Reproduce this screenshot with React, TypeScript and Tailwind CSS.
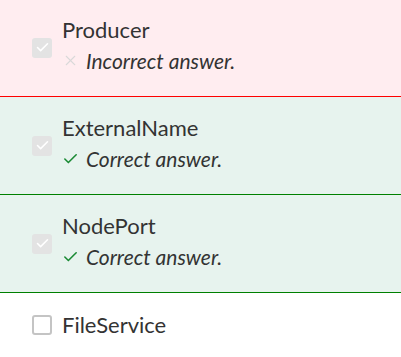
import { Check, X } from "lucide-react";

type Option = {
  label: string;
  state: "incorrect" | "correct" | "none";
};

const OPTIONS: Option[] = [
  { label: "Producer", state: "incorrect" },
  { label: "ExternalName", state: "correct" },
  { label: "NodePort", state: "correct" },
  { label: "FileService", state: "none" },
];

function Box({ checked }: { checked: boolean }) {
  if (!checked) {
    return <span className="h-5 w-5 shrink-0 rounded-[3px] border-2 border-[#c4c4c4] bg-white" />;
  }
  return (
    <span className="flex h-5 w-5 shrink-0 items-center justify-center rounded-[3px] bg-[#e3e3e3]">
      <Check size={15} strokeWidth={2.5} className="text-white" />
    </span>
  );
}

function Row({ option }: { option: Option }) {
  const { label, state } = option;
  const tone =
    state === "incorrect"
      ? "bg-[#ffedf0] border-b border-[#ff0000]"
      : state === "correct"
        ? "bg-[#e7f3ee] border-b border-[#008000]"
        : "bg-white";

  return (
    <div className={`flex items-center gap-[10px] px-8 ${state === "none" ? "py-[17px]" : "h-[98px]"} ${tone}`}>
      <Box checked={state !== "none"} />
      <div className={`flex flex-col ${state === "none" ? "" : "pb-1"}`}>
        <span className="text-[22px] font-normal leading-[30px] text-[#333]">{label}</span>
        {state !== "none" ? (
          <span className="flex items-center text-[21px] font-normal italic leading-[32px] text-[#333]">
            <span className="mr-[7px] flex w-[17px] items-center">
              {state === "correct" ? (
                <Check size={18} strokeWidth={2.25} className="text-[#1a8a34]" />
              ) : (
                <X size={17} strokeWidth={1.5} className="text-[#d9d9d9]" />
              )}
            </span>
            {state === "correct" ? "Correct answer." : "Incorrect answer."}
          </span>
        ) : null}
      </div>
    </div>
  );
}

export default function App() {
  return (
    <div className="-mt-px w-[401px] bg-white" style={{ fontFamily: "Lato, 'Noto Sans', sans-serif" }}>
      {OPTIONS.map((o) => (
        <Row key={o.label} option={o} />
      ))}
    </div>
  );
}
